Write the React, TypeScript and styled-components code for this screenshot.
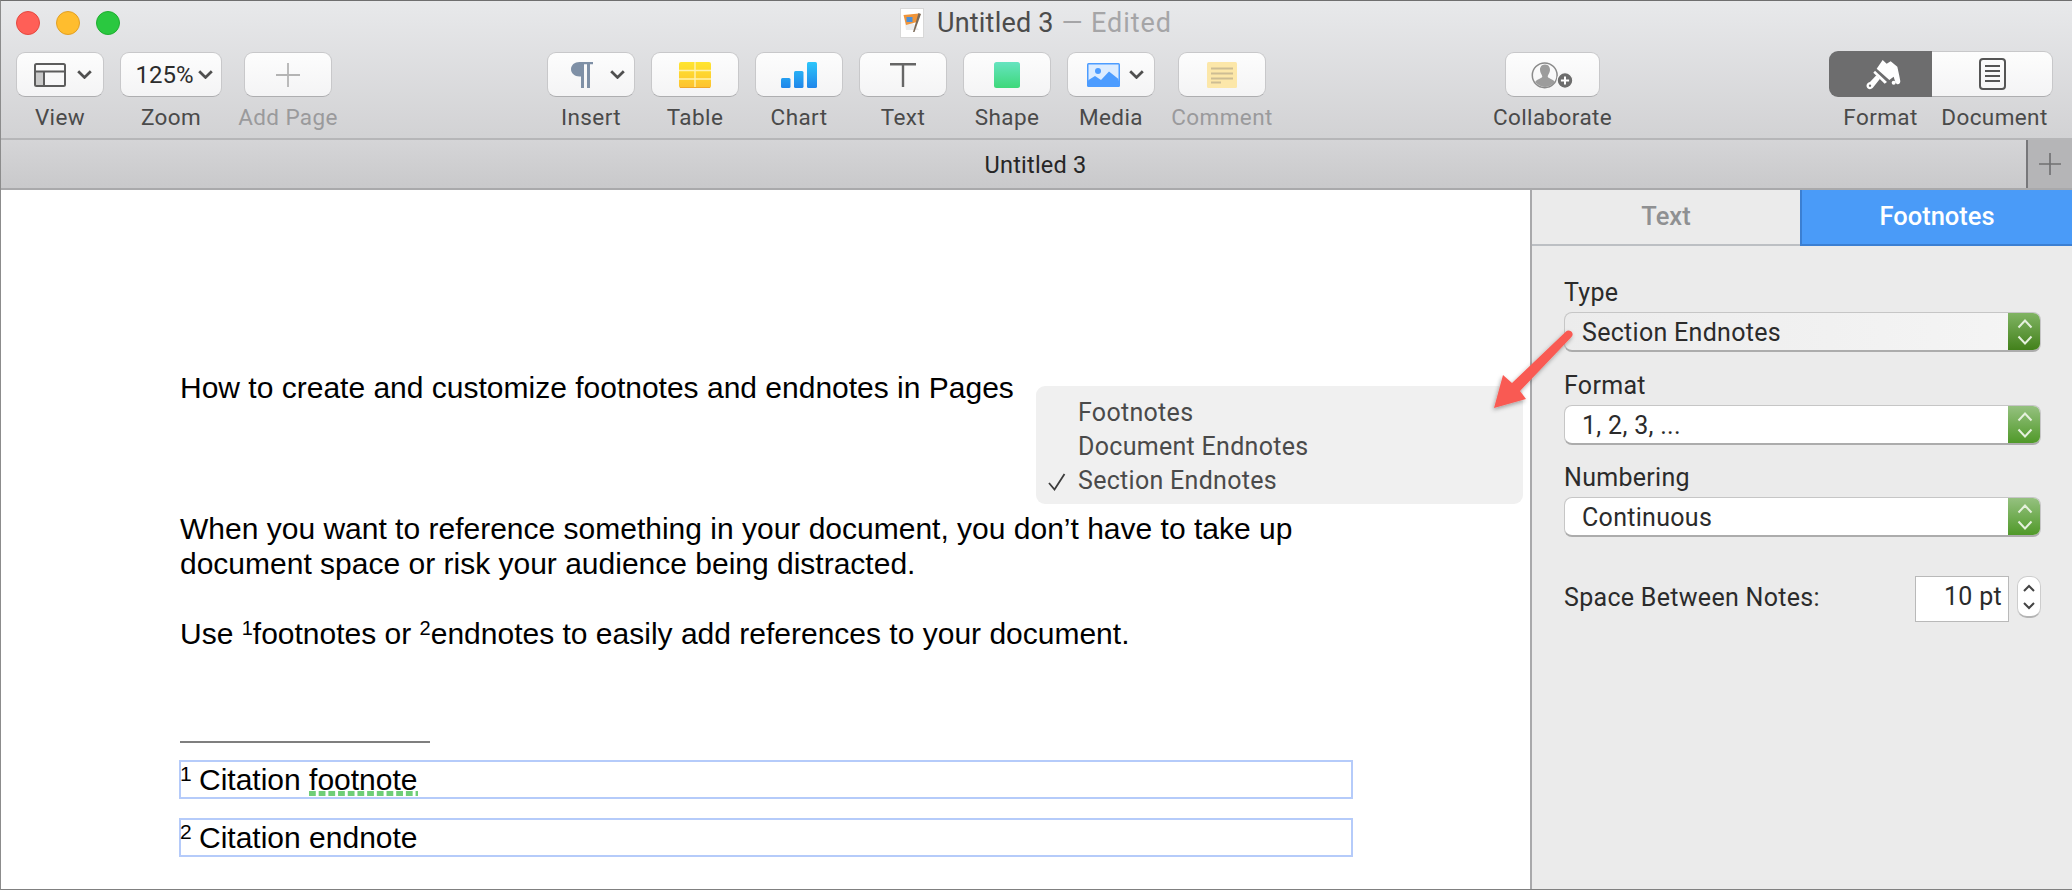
import React from "react";
import styled, { createGlobalStyle } from "styled-components";

const UI = `Roboto, "Liberation Sans", sans-serif`;
const DOC = `"Liberation Sans", Arial, sans-serif`;

const Global = createGlobalStyle`
  html, body { margin: 0; padding: 0; background: #fff; }
  #root { width: 2072px; height: 890px; overflow: hidden; }
`;

const Win = styled.div`
  position: relative;
  width: 2072px;
  height: 890px;
  box-sizing: border-box;
  display: flex;
  flex-direction: column;
  border-top: 1px solid #6f6f6f;
  border-left: 1px solid #8c8c8c;
  border-bottom: 1px solid #808080;
  font-family: ${UI};
  overflow: hidden;
`;

const Chrome = styled.header`
  flex: none;
  height: 139px;
  display: flex;
  flex-direction: column;
  background: linear-gradient(180deg, #e8e9eb 0%, #d2d2d4 100%);
  border-bottom: 2px solid #b6b6b8;
  box-sizing: border-box;
`;

const TitleBar = styled.div`
  height: 45px;
  flex: none;
  display: flex;
  align-items: center;
  padding-left: 15px;
`;

const Lights = styled.div`
  display: flex;
  gap: 16px;
  margin-top: -1px;
`;

const Light = styled.span<{ $fill: string; $edge: string }>`
  width: 24px;
  height: 24px;
  border-radius: 50%;
  box-sizing: border-box;
  background: ${(p) => p.$fill};
  border: 1px solid ${(p) => p.$edge};
`;

const Title = styled.div`
  margin: -1px 0 0 780px;
  display: flex;
  align-items: center;
  font-size: 27px;
  color: #4c4c4c;
  gap: 13px;
  letter-spacing: 0.2px;
`;

const Edited = styled.span`
  color: #a5a5a7;
  margin-left: 1px;
  letter-spacing: 0.9px;
`;

const Toolbar = styled.div`
  display: flex;
  align-items: flex-start;
  padding: 6px 0 0 15px;
`;

const Tool = styled.div<{ $w: number; $ml?: number }>`
  width: ${(p) => p.$w}px;
  margin-left: ${(p) => p.$ml ?? 16}px;
  display: flex;
  flex-direction: column;
  align-items: center;
  &:first-child { margin-left: 0; }
`;

const ToolBtn = styled.div<{ $gap?: number; $pl?: number }>`
  width: 100%;
  height: 45px;
  box-sizing: border-box;
  display: flex;
  align-items: center;
  justify-content: center;
  gap: ${(p) => p.$gap ?? 0}px;
  padding-left: ${(p) => p.$pl ?? 0}px;
  background: linear-gradient(180deg, #fdfdfd 0%, #f4f4f5 100%);
  border: 1px solid #c8c8ca;
  border-bottom-color: #aeaeb0;
  border-radius: 9px;
  font-size: 24px;
  color: #2c2c2c;
`;

const ToolLabel = styled.div<{ $off?: boolean }>`
  margin-top: 7px;
  line-height: 26px;
  font-size: 22.5px;
  white-space: nowrap;
  letter-spacing: 0.4px;
  color: ${(p) => (p.$off ? "#9a9a9c" : "#4a4a4a")};
`;

const Segmented = styled.div`
  display: flex;
  margin-left: 229px;
  width: 224px;
  flex-direction: column;
`;

const SegRow = styled.div`
  display: flex;
  height: 46px;
  margin-top: -1px;
`;

const Seg = styled.div<{ $on?: boolean; $w: number }>`
  width: ${(p) => p.$w}px;
  box-sizing: border-box;
  display: flex;
  align-items: center;
  justify-content: center;
  background: ${(p) => (p.$on ? "#6d6d6e" : "linear-gradient(180deg,#fdfdfd,#f4f4f5)")};
  border: ${(p) => (p.$on ? "none" : "1px solid #c8c8ca")};
  border-bottom-color: #aeaeb0;
  border-left: none;
  border-radius: ${(p) => (p.$on ? "9px 0 0 9px" : "0 9px 9px 0")};
`;

const SegLabels = styled.div`
  display: flex;
  margin-top: 7px;
`;

const SegLabel = styled(ToolLabel)<{ $w: number }>`
  margin-top: 0;
  flex: none;
  width: ${(p) => p.$w}px;
  text-align: center;
`;

const TabBar = styled.div`
  flex: none;
  height: 50px;
  display: flex;
  align-items: stretch;
  background: linear-gradient(180deg, #d5d5d7 0%, #c9c9cb 100%);
  border-bottom: 2px solid #a9a9ab;
  box-sizing: border-box;
`;

const TabTitle = styled.div`
  flex: 1;
  display: flex;
  align-items: center;
  justify-content: center;
  font-size: 23.5px;
  color: #262626;
  letter-spacing: 0.2px;
  padding: 1px 0 0 44px;
`;

const NewTab = styled.div`
  width: 46px;
  flex: none;
  display: flex;
  align-items: center;
  justify-content: center;
  background: #b5b5b7;
  border-left: 2px solid #77777a;
  box-sizing: border-box;
`;

const Main = styled.div`
  flex: 1;
  display: flex;
  min-height: 0;
`;

const Doc = styled.main`
  flex: 1;
  background: #fff;
  padding: 180px 0 0 179px;
  font-family: ${DOC};
  font-size: 30px;
  line-height: 35px;
  color: #000;
  box-sizing: border-box;
`;

const Para = styled.p<{ $mt: number }>`
  margin: ${(p) => p.$mt}px 0 0;
  white-space: nowrap;
`;

const Sup = styled.sup`
  font-size: 20px;
  line-height: 0;
  vertical-align: 9px;
`;

const NoteSup = styled.sup`
  font-size: 21px;
  line-height: 0;
  margin-left: -1px;
  margin-right: -1px;
  align-self: flex-start;
  margin-top: 12px;
`;

const Rule = styled.div`
  width: 250px;
  height: 2px;
  margin-top: 90px;
  background: #7f7f7f;
`;

const Note = styled.div<{ $mt: number }>`
  margin: ${(p) => p.$mt}px 0 0 -1px;
  width: 1174px;
  height: 39px;
  flex: none;
  box-sizing: border-box;
  border: 2px solid #b5cbfa;
  display: flex;
  align-items: center;
  white-space: pre;
`;

const Squiggle = styled.span`
  background-image: linear-gradient(90deg, #6fce78 0 6.5px, transparent 6.5px);
  background-size: 9.7px 5px;
  background-repeat: repeat-x;
  background-position: 0 calc(100% - 1px);
`;

const Side = styled.aside`
  flex: none;
  width: 542px;
  box-sizing: border-box;
  background: #ebebeb;
  border-left: 2px solid #a9a9ab;
  display: flex;
  flex-direction: column;
`;

const SideTabs = styled.div`
  display: flex;
  height: 56px;
  flex: none;
`;

const SideTab = styled.div<{ $on?: boolean }>`
  display: flex;
  align-items: center;
  justify-content: center;
  box-sizing: border-box;
  font-size: 25.5px;
  font-weight: 500;
  padding-bottom: 2px;
  ${(p) =>
    p.$on
      ? `width: 272px; background: #4a9bf8; color: #fff; border-left: 2px solid #3b7fd2; border-bottom: 2px solid #3b7fd2;`
      : `flex: 1; background: #ebebeb; color: #8f9092; border-bottom: 2px solid #bcbfc3;`}
`;

const SidePanel = styled.div`
  padding: 34px 31px 0 32px;
  color: #2b2b2b;
  font-size: 25px;
  letter-spacing: 0.3px;
`;

const FieldLabel = styled.div<{ $mt?: number }>`
  line-height: 26px;
  margin-top: ${(p) => p.$mt ?? 0}px;
`;

const Select = styled.div<{ $tint?: boolean }>`
  height: 40px;
  margin-top: 6px;
  box-sizing: border-box;
  display: flex;
  align-items: center;
  justify-content: space-between;
  padding-left: 17px;
  border: 1px solid #c6c6c6;
  border-bottom: 2px solid #acacac;
  border-radius: 8px;
  background: ${(p) => (p.$tint ? "linear-gradient(90deg,#ececec,#f5f5f5)" : "#fff")};
  overflow: hidden;
`;

const SelectValue = styled.span`
  margin-top: 2px;
`;

const Stepper = styled.div<{ $tint?: boolean }>`
  width: 33px;
  align-self: stretch;
  margin: -1px -1px -2px 0;
  display: flex;
  align-items: center;
  justify-content: center;
  background: ${(p) =>
    p.$tint
      ? "linear-gradient(180deg,#82b565 0%,#3f7e17 100%)"
      : "linear-gradient(180deg,#97c282 0%,#4c9724 100%)"};
`;

const SpaceRow = styled.div`
  display: flex;
  align-items: flex-start;
  margin-top: 39px;
`;

const SpaceLabel = styled.div`
  flex: 1;
  line-height: 44px;
`;

const NumBox = styled.div`
  width: 94px;
  height: 46px;
  box-sizing: border-box;
  background: #fff;
  border: 1px solid #b9b9b9;
  text-align: right;
  padding-right: 6px;
  line-height: 40px;
`;

const Spin = styled.div`
  width: 24px;
  height: 42px;
  margin-left: 8px;
  box-sizing: border-box;
  background: #fff;
  border: 1px solid #cdcdcd;
  border-bottom: 2px solid #b4b4b4;
  border-radius: 10px;
  display: flex;
  align-items: center;
  justify-content: center;
`;

const Menu = styled.div`
  position: absolute;
  left: 1035px;
  top: 385px;
  width: 487px;
  height: 118px;
  box-sizing: border-box;
  padding: 10px 0 0 42px;
  background: #f0f0f0;
  border-radius: 9px;
  color: #4a4a4a;
  font-size: 25px;
  letter-spacing: 0.3px;
`;

const MenuItem = styled.div`
  position: relative;
  line-height: 34px;
`;

const Tick = styled.svg`
  position: absolute;
  left: -30px;
  top: 9px;
`;

const Pointer = styled.svg`
  position: absolute;
  left: 1468px;
  top: 309px;
  overflow: visible;
`;

const Chevron = () => (
  <svg width="15" height="9" viewBox="0 0 15 9">
    <polyline points="1.2,1.2 7.5,7.4 13.8,1.2" fill="none" stroke="#4f4f4f" strokeWidth="2.8" />
  </svg>
);

const DocIcon = () => (
  <svg width="24" height="30" viewBox="0 0 24 30">
    <rect x="0.5" y="0.5" width="23" height="29" fill="#fff" stroke="#d8d8d8" />
    <path d="M4 8 L13 15 L19 22 H6Z" fill="#ececec" />
    <path d="M3.5 7 L19 5.5 L17 14 L6 17 Z" fill="#f0953a" />
    <rect x="6.5" y="9" width="6" height="5" fill="#4a90d9" />
    <path d="M18.5 5 L21 6 L14.5 24 L13 24 Z" fill="#7c6a58" />
  </svg>
);

const ViewIcon = () => (
  <svg width="32" height="24" viewBox="0 0 32 24">
    <rect x="2" y="9" width="8" height="14" fill="#c9c9c9" />
    <rect x="1" y="1" width="30" height="22" rx="1.5" fill="none" stroke="#5c5c5c" strokeWidth="2" />
    <path d="M1 8.5H31M10 8.5V23" stroke="#5c5c5c" strokeWidth="2" fill="none" />
  </svg>
);

const PlusIcon = ({ size, color }: { size: number; color: string }) => (
  <svg width={size} height={size} viewBox="0 0 24 24">
    <path d="M12 0V24M0 12H24" stroke={color} strokeWidth="1.8" fill="none" />
  </svg>
);

const Pilcrow = () => (
  <svg width="22" height="26" viewBox="0 0 22 26">
    <path
      d="M22 0H8.5C3.5 0 0 3.2 0 7.2S3.5 14.4 8.5 14.4H10V26H13V2.2H16V26H19V2.2H22Z"
      fill="#7f90a6"
    />
  </svg>
);

const TableIcon = () => (
  <svg width="32" height="26" viewBox="0 0 32 26">
    <defs>
      <linearGradient id="tbl" x1="0" y1="0" x2="0" y2="1">
        <stop offset="0" stopColor="#ffe52f" />
        <stop offset="1" stopColor="#fdc22f" />
      </linearGradient>
    </defs>
    <rect width="32" height="26" rx="2" fill="url(#tbl)" />
    <path d="M0 8.5H32M0 17H32M16 0V26" stroke="#fff3b0" strokeWidth="1.4" />
    <path d="M1 25.5H31" stroke="#f0a828" strokeWidth="1" />
  </svg>
);

const ChartIcon = () => (
  <svg width="36" height="26" viewBox="0 0 36 26">
    <defs>
      <linearGradient id="cht" x1="0" y1="0" x2="0" y2="26" gradientUnits="userSpaceOnUse">
        <stop offset="0" stopColor="#2dc6fa" />
        <stop offset="1" stopColor="#2086ea" />
      </linearGradient>
    </defs>
    <rect x="0" y="16" width="9.5" height="10" rx="1.5" fill="url(#cht)" />
    <rect x="13" y="9" width="9.5" height="17" rx="1.5" fill="url(#cht)" />
    <rect x="26" y="0" width="10" height="26" rx="1.5" fill="url(#cht)" />
  </svg>
);

const TextIcon = () => (
  <svg width="26" height="24" viewBox="0 0 26 24">
    <path d="M0 1.2H26M13 1.2V24" stroke="#666" strokeWidth="2.4" fill="none" />
  </svg>
);

const ShapeIcon = () => (
  <svg width="26" height="26" viewBox="0 0 26 26">
    <defs>
      <linearGradient id="shp" x1="0" y1="0" x2="0" y2="1">
        <stop offset="0" stopColor="#66e4c0" />
        <stop offset="1" stopColor="#3ed87a" />
      </linearGradient>
    </defs>
    <rect width="26" height="26" rx="2.5" fill="url(#shp)" />
  </svg>
);

const MediaIcon = () => (
  <svg width="33" height="24" viewBox="0 0 33 24">
    <rect width="33" height="24" rx="1.5" fill="#4c9cff" />
    <rect x="1.5" y="1.5" width="30" height="16" fill="#dcecff" />
    <circle cx="11" cy="8" r="3" fill="#4c9cff" />
    <path d="M1.5 17L8 13L14 17L22 8.5L31.5 16V24H1.5Z" fill="#4c9cff" />
  </svg>
);

const CommentIcon = () => (
  <svg width="30" height="26" viewBox="0 0 30 26">
    <rect width="30" height="26" rx="1.5" fill="#fce7a9" />
    <path d="M4 6.5H26M4 11.5H26M4 16.5H26M4 20.5H14" stroke="#cdbd94" strokeWidth="2" />
  </svg>
);

const CollabIcon = () => (
  <svg width="44" height="28" viewBox="10 8 44 28">
    <circle cx="23.7" cy="22.3" r="12.4" fill="none" stroke="#8a8a8a" strokeWidth="1.5" />
    <path
      d="M24 11.5C20.2 11.5 19 14.5 19 17C19 20 21.3 22 21.3 23.5C21.3 25.5 15.5 26 14.2 29C17 32.5 21 34 24 34C27 34 31 32.5 33.8 29C32.5 26 26.7 25.5 26.7 23.5C26.7 22 29 20 29 17C29 14.5 27.8 11.5 24 11.5Z"
      fill="#9c9c9c"
    />
    <circle cx="44" cy="27.5" r="7.8" fill="#6d6d6d" stroke="#f7f7f7" strokeWidth="1.2" />
    <path d="M44 23.4V31.6M39.9 27.5H48.1" stroke="#fff" strokeWidth="2" />
  </svg>
);

const BrushIcon = () => (
  <svg width="50" height="44" viewBox="0 0 150 132">
    <path
      d="M62 50L80 24L92 35L104 28L124 44L130 72L133 88Q132 98 124 97Q117 96 117 88L113 74L100 84Z"
      fill="#fff"
    />
    <circle cx="113" cy="92" r="6" fill="#fff" />
    <path d="M57 56L93 90L86 95L52 62Z" fill="#fff" />
    <path d="M61 70L72 80L50 108C44 114 34 112 32 104C30 97 36 91 42 90Z" fill="#fff" />
    <circle cx="42" cy="101" r="3.5" fill="#6d6d6e" />
  </svg>
);

const PageIcon = () => (
  <svg width="27" height="32" viewBox="0 0 27 32">
    <rect x="1" y="1" width="25" height="30" rx="3" fill="none" stroke="#555" strokeWidth="2" />
    <path d="M6 8H21M6 13H21M6 18H21M6 23H21" stroke="#555" strokeWidth="2" />
  </svg>
);

const UpDown = () => (
  <svg width="16" height="28" viewBox="0 0 16 28">
    <path d="M1.5 9.5L8 2.5L14.5 9.5M1.5 18.5L8 25.5L14.5 18.5" fill="none" stroke="#e4f0dc" strokeWidth="2" />
  </svg>
);

const SpinArrows = () => (
  <svg width="12" height="26" viewBox="0 0 12 26">
    <path d="M1 7L6 2L11 7M1 19L6 24L11 19" fill="none" stroke="#444" strokeWidth="2" />
  </svg>
);

export default function App() {
  return (
    <Win>
      <Global />
      <Chrome>
        <TitleBar>
          <Lights>
            <Light $fill="#ff5f57" $edge="#e5483f" />
            <Light $fill="#ffbd2e" $edge="#e2a024" />
            <Light $fill="#2ac840" $edge="#1fae30" />
          </Lights>
          <Title>
            <DocIcon />
            <span>
              Untitled 3 <Edited>— Edited</Edited>
            </span>
          </Title>
        </TitleBar>
        <Toolbar>
          <Tool $w={88}>
            <ToolBtn $gap={11} $pl={6}><ViewIcon /><Chevron /></ToolBtn>
            <ToolLabel>View</ToolLabel>
          </Tool>
          <Tool $w={102}>
            <ToolBtn $gap={4} $pl={6}>125%<Chevron /></ToolBtn>
            <ToolLabel>Zoom</ToolLabel>
          </Tool>
          <Tool $w={88} $ml={22}>
            <ToolBtn><PlusIcon size={24} color="#b4b4b4" /></ToolBtn>
            <ToolLabel $off>Add Page</ToolLabel>
          </Tool>
          <Tool $w={88} $ml={215}>
            <ToolBtn $gap={17} $pl={14}><Pilcrow /><Chevron /></ToolBtn>
            <ToolLabel>Insert</ToolLabel>
          </Tool>
          <Tool $w={88}>
            <ToolBtn><TableIcon /></ToolBtn>
            <ToolLabel>Table</ToolLabel>
          </Tool>
          <Tool $w={88}>
            <ToolBtn><ChartIcon /></ToolBtn>
            <ToolLabel>Chart</ToolLabel>
          </Tool>
          <Tool $w={88}>
            <ToolBtn><TextIcon /></ToolBtn>
            <ToolLabel>Text</ToolLabel>
          </Tool>
          <Tool $w={88}>
            <ToolBtn><ShapeIcon /></ToolBtn>
            <ToolLabel>Shape</ToolLabel>
          </Tool>
          <Tool $w={88}>
            <ToolBtn $gap={9} $pl={8}><MediaIcon /><Chevron /></ToolBtn>
            <ToolLabel>Media</ToolLabel>
          </Tool>
          <Tool $w={88} $ml={23}>
            <ToolBtn><CommentIcon /></ToolBtn>
            <ToolLabel $off>Comment</ToolLabel>
          </Tool>
          <Tool $w={95} $ml={239}>
            <ToolBtn><CollabIcon /></ToolBtn>
            <ToolLabel>Collaborate</ToolLabel>
          </Tool>
          <Segmented>
            <SegRow>
              <Seg $on $w={103}><BrushIcon /></Seg>
              <Seg $w={121}><PageIcon /></Seg>
            </SegRow>
            <SegLabels>
              <SegLabel $w={103}>Format</SegLabel>
              <SegLabel $w={125}>Document</SegLabel>
            </SegLabels>
          </Segmented>
        </Toolbar>
      </Chrome>
      <TabBar>
        <TabTitle>Untitled 3</TabTitle>
        <NewTab><PlusIcon size={22} color="#707072" /></NewTab>
      </TabBar>
      <Main>
        <Doc>
          <Para $mt={0}>How to create and customize footnotes and endnotes in Pages</Para>
          <Para $mt={106}>
            When you want to reference something in your document, you don’t have to take up
            <br />
            document space or risk your audience being distracted.
          </Para>
          <Para $mt={35}>
            Use <Sup>1</Sup>footnotes or <Sup>2</Sup>endnotes to easily add references to your document.
          </Para>
          <Rule />
          <Note $mt={17}>
            <NoteSup>1</NoteSup> Citation <Squiggle>footnote</Squiggle>
          </Note>
          <Note $mt={19}>
            <NoteSup>2</NoteSup> Citation endnote
          </Note>
        </Doc>
        <Side>
          <SideTabs>
            <SideTab>Text</SideTab>
            <SideTab $on>Footnotes</SideTab>
          </SideTabs>
          <SidePanel>
            <FieldLabel>Type</FieldLabel>
            <Select $tint>
              <SelectValue>Section Endnotes</SelectValue>
              <Stepper $tint><UpDown /></Stepper>
            </Select>
            <FieldLabel $mt={21}>Format</FieldLabel>
            <Select>
              <SelectValue>1, 2, 3, ...</SelectValue>
              <Stepper><UpDown /></Stepper>
            </Select>
            <FieldLabel $mt={20}>Numbering</FieldLabel>
            <Select>
              <SelectValue>Continuous</SelectValue>
              <Stepper><UpDown /></Stepper>
            </Select>
            <SpaceRow>
              <SpaceLabel>Space Between Notes:</SpaceLabel>
              <NumBox>10 pt</NumBox>
              <Spin><SpinArrows /></Spin>
            </SpaceRow>
          </SidePanel>
        </Side>
      </Main>
      <Menu>
        <MenuItem>Footnotes</MenuItem>
        <MenuItem>Document Endnotes</MenuItem>
        <MenuItem>
          <Tick width="18" height="18" viewBox="0 0 18 18">
            <polyline points="1,10 6.5,16.5 16.5,1" fill="none" stroke="#3c3c3c" strokeWidth="1.8" />
          </Tick>
          Section Endnotes
        </MenuItem>
      </Menu>
      <Pointer width="110" height="110" viewBox="0 0 110 110">
        <defs>
          <filter id="ds" x="-30%" y="-30%" width="160%" height="160%">
            <feDropShadow dx="-1" dy="2" stdDeviation="2" floodColor="#000" floodOpacity="0.35" />
          </filter>
        </defs>
        <g filter="url(#ds)">
          <path
            d="M97 21.5C99 19.5 103 21 103.5 23.5C104 25 103 26.5 102 27.5L51 81L57 89L25 98L34 65L43 73Z"
            fill="#f95a52"
          />
        </g>
      </Pointer>
    </Win>
  );
}
